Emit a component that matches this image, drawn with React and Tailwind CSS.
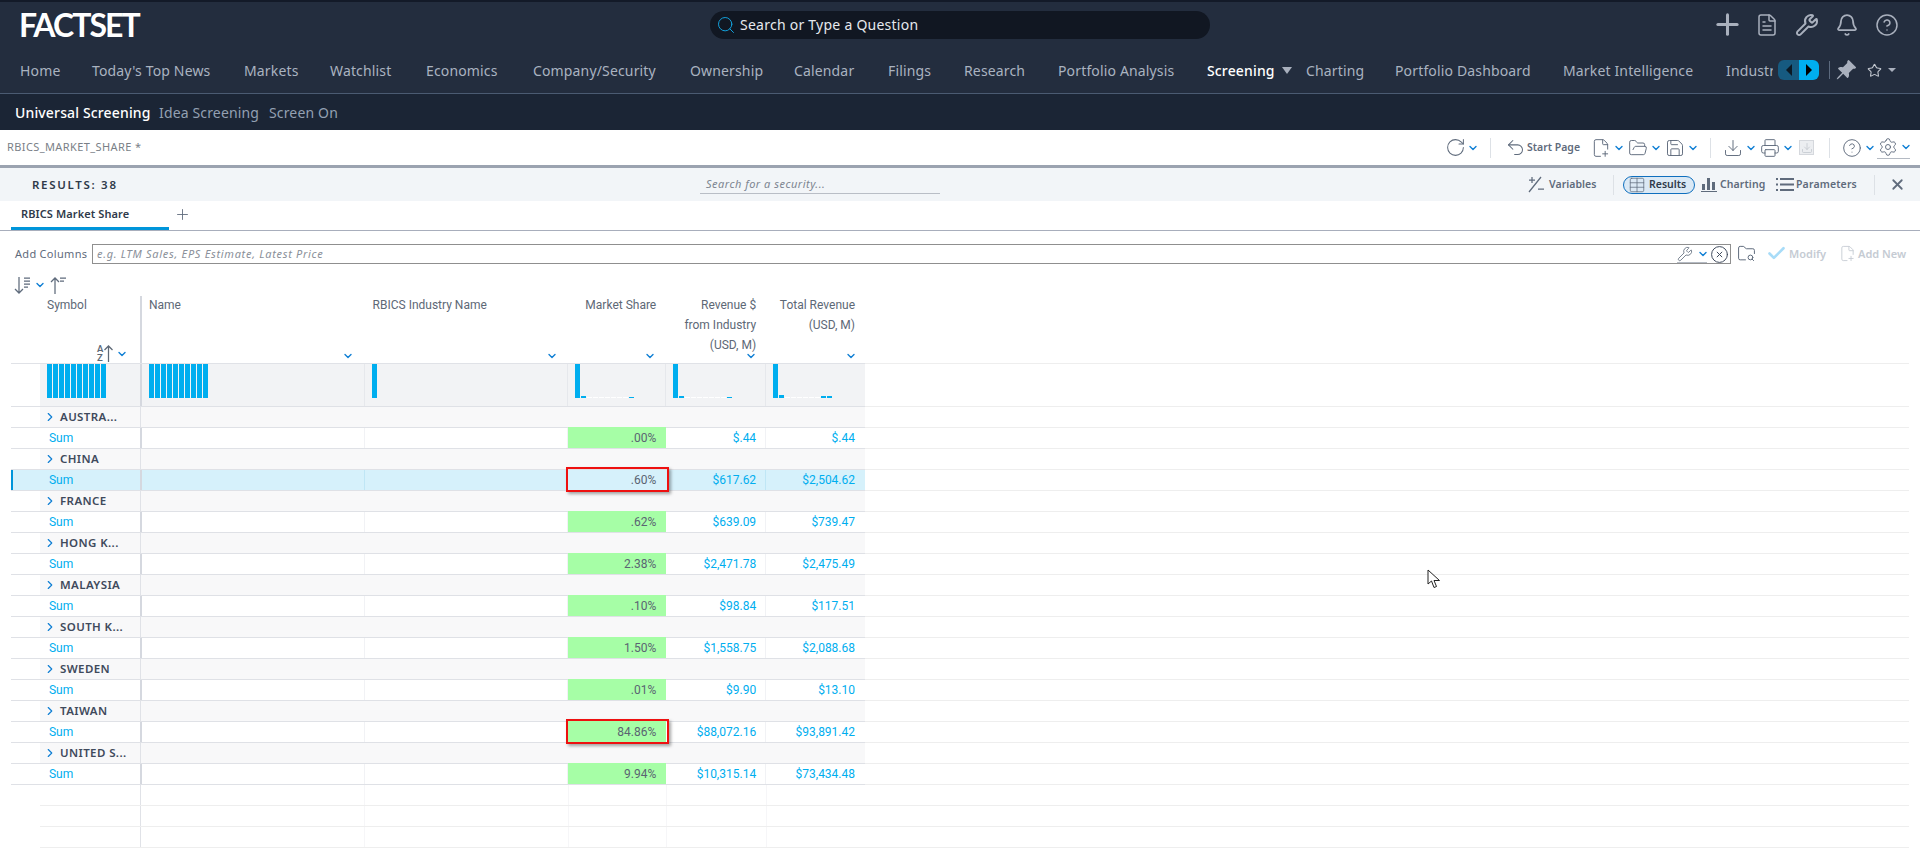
// FactSet universal screening page
import React from "react";
import {
  Bell,
  CircleHelp,
  CircleX,
  ChevronDown,
  ChevronRight,
  Check,
  Download,
  FolderOpen,
  FolderSearch,
  Plus,
  Printer,
  RotateCw,
  Save,
  Search,
  Settings,
  Star,
  Table,
  Undo2,
  Wrench,
  X,
  FilePlus2,
  FileText,
} from "lucide-react";
import { BsPinAngleFill } from "react-icons/bs";

const navItems = [
  { label: "Home", w: "w-[72px]" },
  { label: "Today's Top News", w: "w-[152px]" },
  { label: "Markets", w: "w-[86px]" },
  { label: "Watchlist", w: "w-[96px]" },
  { label: "Economics", w: "w-[107px]" },
  { label: "Company/Security", w: "w-[157px]" },
  { label: "Ownership", w: "w-[104px]" },
  { label: "Calendar", w: "w-[94px]" },
  { label: "Filings", w: "w-[76px]" },
  { label: "Research", w: "w-[94px]" },
  { label: "Portfolio Analysis", w: "w-[149px]" },
  { label: "Screening", w: "w-[99px]", active: true },
  { label: "Charting", w: "w-[89px]" },
  { label: "Portfolio Dashboard", w: "w-[168px]" },
  { label: "Market Intelligence", w: "w-[163px]" },
  { label: "Industries", w: "w-[80px]" },
];

const groups = [
  { name: "AUSTRA...", share: ".00%", rev: "$.44", total: "$.44" },
  { name: "CHINA", share: ".60%", rev: "$617.62", total: "$2,504.62", selected: true },
  { name: "FRANCE", share: ".62%", rev: "$639.09", total: "$739.47" },
  { name: "HONG K...", share: "2.38%", rev: "$2,471.78", total: "$2,475.49" },
  { name: "MALAYSIA", share: ".10%", rev: "$98.84", total: "$117.51" },
  { name: "SOUTH K...", share: "1.50%", rev: "$1,558.75", total: "$2,088.68" },
  { name: "SWEDEN", share: ".01%", rev: "$9.90", total: "$13.10" },
  { name: "TAIWAN", share: "84.86%", rev: "$88,072.16", total: "$93,891.42", boxed: true },
  { name: "UNITED S...", share: "9.94%", rev: "$10,315.14", total: "$73,434.48" },
];

const flatBars = [34, 34, 34, 34, 34, 34, 34, 34, 34, 34];

// Small blue chevron used all over the toolbars
const Chev = ({ className = "" }) => (
  <span className={"flex w-2 shrink-0 justify-center text-[#0f7fd4] " + className}>
    <ChevronDown size={12} strokeWidth={2.75} className="shrink-0" />
  </span>
);

// Toolbar icon: 16px footprint, the drawing may spill a little over it
const Tool = ({ icon: Icon, size = 20, stroke = 1.15, className = "" }) => (
  <span className={"flex w-4 shrink-0 justify-center " + className}>
    <Icon size={size} strokeWidth={stroke} className="shrink-0" />
  </span>
);

const Sep = ({ className = "" }) => (
  <div className={"h-5 w-px shrink-0 bg-[#dde1e6] " + className}></div>
);

// Histogram bars, 5px wide on a 6px pitch. Zero values are a white dash.
const Bars = ({ heights, className = "" }) => (
  <div className={"flex h-[34px] items-end gap-px " + className}>
    {heights.map((h, i) => (
      <div
        key={i}
        className={h === 0 ? "h-px w-[5px] bg-white" : "w-[5px] bg-[#00aeef]"}
        style={h === 0 ? undefined : { height: h }}
      ></div>
    ))}
  </div>
);

const TopBar = () => (
  <div className="bg-[#232d3e]">
    <div className="h-[2px] bg-[#131a28]"></div>
    <div className="flex h-[45px] items-center">
      <div className="ml-[19px] w-[691px] font-['Lato',sans-serif] text-[32px] font-bold leading-none tracking-[-1.9px] text-white">
        FACTSET
      </div>
      <div className="flex h-7 w-[500px] items-center rounded-[14px] bg-[#111722] pl-[6px]">
        <Search size={20} strokeWidth={1.15} className="text-[#12a5e2]" />
        <span className="ml-[4px] text-[14px] tracking-[0.25px] text-[#e6e9ee]">Search or Type a Question</span>
      </div>
      <div className="ml-[501px] flex items-center text-[#a9b0bd]">
        <Plus size={33} strokeWidth={2.2} />
        <FileText size={24} strokeWidth={1.5} className="ml-[11px]" />
        <Wrench size={24} strokeWidth={2} className="ml-4" />
        <Bell size={24} strokeWidth={1.75} className="ml-4" />
        <CircleHelp size={24} strokeWidth={1.5} className="ml-4" />
      </div>
    </div>
    <div className="flex h-[47px] items-center border-b border-[#4b5b72] pl-5">
      <div className="flex w-[1753px] overflow-hidden">
        {navItems.map((item) => (
          <div
            key={item.label}
            className={
              item.w +
              " relative shrink-0 whitespace-nowrap text-[14px] tracking-[0.15px] " +
              (item.active ? "font-medium text-white" : "text-[#aab3c0]")
            }
          >
            {item.label}
            {item.active ? (
              <span className="absolute left-[75px] top-[7px] h-0 w-0 border-x-[5px] border-t-[7px] border-x-transparent border-t-[#a9b0bd]"></span>
            ) : null}
          </div>
        ))}
      </div>
      <div className="ml-[5px] flex h-5 w-[41px] overflow-hidden rounded-[6px]">
        <div className="flex w-[21px] items-center justify-center bg-[#165a80]">
          <span className="h-0 w-0 border-y-[6px] border-r-[6px] border-y-transparent border-r-[#0b1a26]"></span>
        </div>
        <div className="flex w-5 items-center justify-center bg-[#00aeef]">
          <span className="h-0 w-0 border-y-[6px] border-l-[6px] border-y-transparent border-l-black"></span>
        </div>
      </div>
      <div className="ml-[10px] h-[18px] w-px bg-[#5c6a7e]"></div>
      <BsPinAngleFill size={22} className="ml-[5px] text-[#a9b0bd]" />
      <Star size={15} strokeWidth={1.75} className="ml-[10px] text-[#c3c8d0]" />
      <span className="ml-[6px] h-0 w-0 border-x-[4px] border-t-[4px] border-x-transparent border-t-[#a9b0bd]"></span>
    </div>
  </div>
);

const SubNav = () => (
  <div className="flex h-9 items-center bg-[#1b2535] pl-[15px] text-[14px] tracking-[0.15px] text-[#93a0b2]">
    <div className="w-[144px] whitespace-nowrap font-medium text-white">Universal Screening</div>
    <div className="w-[110px] whitespace-nowrap">Idea Screening</div>
    <div className="whitespace-nowrap">Screen On</div>
  </div>
);

const Toolbar = () => (
  <div className="flex h-[38px] items-start border-b-[3px] border-[#9ba3b0] bg-white text-[#5f6b7c]">
    <div className="flex h-[35px] w-full items-center pr-[10px]">
      <div className="pl-[7px] text-[11px] tracking-[0.4px] text-[#7a7f87]">RBICS_MARKET_SHARE *</div>
      <div className="ml-auto flex items-center">
        <Tool icon={RotateCw} size={21} />
        <Chev className="ml-[6px]" />
        <Sep className="ml-[13px]" />
        <Tool icon={Undo2} size={21} className="ml-4" />
        <div className="ml-1 w-[56px] whitespace-nowrap text-[10.5px] font-semibold">Start Page</div>
        <Tool icon={FilePlus2} className="ml-[10px]" />
        <Chev className="ml-[6px]" />
        <Tool icon={FolderOpen} className="ml-[7px]" />
        <Chev className="ml-[6px]" />
        <Tool icon={Save} className="ml-[7px]" />
        <Chev className="ml-[6px]" />
        <Sep className="ml-[13px]" />
        <Tool icon={Download} className="ml-[14px]" />
        <Chev className="ml-[6px]" />
        <Tool icon={Printer} className="ml-[7px]" />
        <Chev className="ml-[6px]" />
        <div className="ml-[7px] flex h-[15px] w-[15px] shrink-0 items-center justify-center border border-[#d5d8dd] bg-[#eceef1] text-[#c0c5cc]">
          <Download size={12} strokeWidth={1.5} />
        </div>
        <Sep className="ml-[15px]" />
        <Tool icon={CircleHelp} className="ml-[14px]" />
        <Chev className="ml-[6px]" />
        <div className="ml-[3px] flex items-center border-b border-[#b4bac3] pb-px pl-[3px]">
          <Tool icon={Settings} />
          <Chev className="ml-[6px]" />
        </div>
      </div>
    </div>
  </div>
);

const ResultsBar = () => (
  <div className="flex h-[33px] items-center bg-[#f2f5f8] text-[#5f6b7c]">
    <div className="w-[700px] pl-8 text-[11.5px] font-semibold tracking-[1.7px] text-[#2f3a4a]">RESULTS: 38</div>
    <div className="flex h-[18px] w-[240px] items-center border-b border-[#b9bec6] pl-[6px] text-[11px] italic tracking-[0.5px] text-[#7d8591]">
      Search for a security...
    </div>
    <div className="ml-auto flex items-center pr-[14px] text-[10.5px] font-semibold">
      <svg width="17" height="17" viewBox="0 0 17 17" fill="none" stroke="currentColor" strokeWidth="1.25">
        <path d="M1 16 L13 1 M1 4 H7 M4 1 V7 M10 13 H16" />
      </svg>
      <div className="ml-1 w-[47px] tracking-[0.05px]">Variables</div>
      <Sep className="ml-[17px]" />
      <div className="ml-[9px] flex h-[18px] w-[72px] items-center overflow-hidden rounded-full border-[1.5px] border-[#0f6fbe] bg-[#dbe9f5] pl-[4px] text-[#2f3a4a]">
        <Table size={18} strokeWidth={1} className="text-[#5f6b7c]" />
        <span className="ml-[3px]">Results</span>
      </div>
      <svg width="16" height="15" viewBox="0 0 16 15" fill="currentColor" className="ml-[6px]">
        <path d="M1 7h3v6H1z M6 1h3v12H6z M11 5h3v8h-3z M0 14h16v1H0z" />
      </svg>
      <div className="ml-[3px] w-[45px] tracking-[0.1px]">Charting</div>
      <svg width="18" height="15" viewBox="0 0 18 15" fill="none" stroke="currentColor" strokeWidth="2" className="ml-[11px]">
        <path d="M0 2h2 M4 2h14 M0 7.5h2 M4 7.5h14 M0 13h2 M4 13h14" />
      </svg>
      <div className="ml-[2px] w-[62px] whitespace-nowrap tracking-[0.15px]">Parameters</div>
      <Sep className="ml-4" />
      <X size={17} strokeWidth={2.5} className="ml-[14px]" />
    </div>
  </div>
);

const TabRow = () => (
  <div className="flex h-[30px] border-b border-[#a8aebc] bg-white pl-[11px]">
    <div className="flex h-[29px] w-[158px] items-center border-b-[3px] border-[#0095da] pl-[10px] text-[11px] font-semibold tracking-[0.1px] text-[#2f3a4a]">
      RBICS Market Share
    </div>
    <Plus size={17} strokeWidth={1.25} className="ml-[5px] mt-[5px] text-[#5f6b7c]" />
  </div>
);

const AddColumns = () => (
  <div className="flex h-[41px] items-start bg-white pt-[13px] text-[#5f6b7c]">
    <div className="ml-[15px] w-[77px] whitespace-nowrap pt-[2px] text-[11px] tracking-[0.3px]">Add Columns</div>
    <div className="flex h-5 w-[1639px] items-center border border-[#8f8f8f] pl-[4px] pr-[1px]">
      <span className="text-[11px] italic tracking-[0.7px] text-[#8a9099]">e.g. LTM Sales, EPS Estimate, Latest Price</span>
      <div className="ml-auto flex items-center">
        <div className="flex h-[18px] items-center border-b border-[#b4bac3]">
          <Wrench size={16} strokeWidth={1.25} />
          <Chev className="ml-[6px]" />
        </div>
        <CircleX size={19} strokeWidth={1.25} className="ml-[3px] text-[#3f4a5c]" />
      </div>
    </div>
    <FolderSearch size={19} strokeWidth={1.25} className="ml-[6px]" />
    <Check size={21} strokeWidth={3} className="ml-[10px] -mt-px text-[#a8dcf8]" />
    <div className="ml-[2px] mt-[2px] w-[48px] text-[11px] font-semibold text-[#c5cbd3]">Modify</div>
    <FilePlus2 size={17} strokeWidth={1.25} className="ml-[2px] mt-[1px] text-[#c5cbd3]" />
    <div className="ml-[2px] mt-[2px] whitespace-nowrap text-[11px] font-semibold text-[#c5cbd3]">Add New</div>
  </div>
);

const SortRow = () => (
  <div className="flex h-[23px] items-center bg-white pl-[14px] pt-[3px] text-[#5f6b7c]">
    <svg width="17" height="17" viewBox="0 0 17 17" fill="none" stroke="currentColor" strokeWidth="1.25">
      <path d="M5 0 V16 M1 12 L5 16 L9 12 M10 1 H16 M10 4 H16 M10 7 H16 M10 10 H14" />
    </svg>
    <Chev className="ml-[5px]" />
    <svg width="17" height="17" viewBox="0 0 17 17" fill="none" stroke="currentColor" strokeWidth="1.25" className="ml-[6px]">
      <path d="M5 17 V1 M1 5 L5 1 L9 5 M10 1 H16 M10 4 H14" />
    </svg>
  </div>
);

const HeaderRow = () => (
  <div className="flex bg-white">
    <div className="flex h-[69px] w-[854px] border-b border-[#e0e2e7] pl-[29px] text-[12px] leading-[20px] text-[#5d6876]">
      <div className="relative w-[100px] pl-[7px]">
        Symbol
        <div className="absolute bottom-[1px] left-[57px] flex items-center">
          <div className="flex flex-col text-[9.5px] font-semibold leading-[8.5px]">
            <span>A</span>
            <span>Z</span>
          </div>
          <svg width="11" height="17" viewBox="0 0 11 17" fill="none" stroke="currentColor" strokeWidth="1.25">
            <path d="M5.5 17 V1 M1.5 5 L5.5 1 L9.5 5" />
          </svg>
          <Chev className="ml-[4px]" />
        </div>
      </div>
      <div className="mt-px w-[2px] bg-[#d5d8df]"></div>
      <div className="relative w-[223px] pl-[7px]">
        Name
        <Chev className="absolute bottom-[1px] right-[13px]" />
      </div>
      <div className="relative w-[204px] pl-2">
        RBICS Industry Name
        <Chev className="absolute bottom-[1px] right-[12px]" />
      </div>
      <div className="relative w-[98px] pr-[10px] text-right">
        Market Share
        <Chev className="absolute bottom-[1px] right-[12px]" />
      </div>
      <div className="relative w-[100px] pr-[10px] text-right">
        Revenue $<br />
        from Industry<br />
        (USD, M)
        <Chev className="absolute bottom-[1px] right-[11px]" />
      </div>
      <div className="relative w-[99px] pr-[10px] text-right">
        Total Revenue<br />
        (USD, M)
        <Chev className="absolute bottom-[1px] right-[10px]" />
      </div>
    </div>
    <div className="h-[69px] flex-1 border-b border-[#eeeeee]"></div>
  </div>
);

const HistogramRow = () => (
  <div className="flex bg-white">
    <div className="flex h-[43px] w-[854px] border-b border-[#dfe1e6] pl-[29px]">
      <div className="flex w-full bg-[#f2f3f5]">
        <div className="w-[100px] pl-[7px]">
          <Bars heights={flatBars} />
        </div>
        <div className="w-[2px] bg-[#d5d8df]"></div>
        <div className="w-[223px] border-r border-[#e6e8ec] pl-[7px]">
          <Bars heights={flatBars} />
        </div>
        <div className="w-[204px] border-r border-[#e6e8ec] pl-[7px]">
          <Bars heights={[34]} />
        </div>
        <div className="w-[98px] border-r border-[#e6e8ec] pl-[7px]">
          <Bars heights={[34, 2, 0, 0, 0, 0, 0, 0, 0, 1]} />
        </div>
        <div className="w-[100px] border-r border-[#e6e8ec] pl-[7px]">
          <Bars heights={[34, 2, 0, 0, 0, 0, 0, 0, 0, 1]} />
        </div>
        <div className="w-[99px] pl-[7px]">
          <Bars heights={[34, 3, 0, 0, 0, 0, 0, 0, 2, 2]} />
        </div>
      </div>
    </div>
    <div className="h-[43px] flex-1 border-b border-[#eeeeee]"></div>
  </div>
);

const GroupRow = ({ name }) => (
  <div className="flex bg-white">
    <div className="flex h-[21px] w-[854px] border-b border-[#dfe1e6] pl-[29px]">
      <div className="flex w-full bg-[#f8f8f9]">
        <div className="flex w-[100px] items-center pl-[3px] font-['Noto_Sans',sans-serif] text-[11.5px] font-semibold tracking-[0.4px] text-[#3f4a5c]">
          <ChevronRight size={14} strokeWidth={2} className="shrink-0 text-[#0f7fd4]" />
          <span className="ml-[3px] whitespace-nowrap">{name}</span>
        </div>
        <div className="w-px bg-[#e0e2e7]"></div>
      </div>
    </div>
    <div className="h-[21px] flex-1 border-b border-[#eeeeee]"></div>
  </div>
);

const SumRow = ({ row }) => {
  const cellBorder = row.selected ? "border-[#bfe6f5]" : "border-[#f1f2f5]";

  return (
    <div className="flex bg-white">
      <div
        className={
          "flex h-[21px] w-[854px] border-b border-[#dfe1e6] " +
          (row.selected ? "bg-[#d6f1fb]" : "")
        }
      >
        <div className={"w-[29px] " + (row.selected ? "border-l-2 border-[#0095da]" : "")}></div>
        <div className="flex w-[100px] items-center pl-[9px] text-[#00aeef]">Sum</div>
        <div className="w-[2px] bg-[#d5d8df]"></div>
        <div className={"w-[223px] border-r " + cellBorder}></div>
        <div className={"w-[204px] border-r " + cellBorder}></div>
        <div
          className={
            "relative -mt-px flex h-[21px] w-[98px] items-center justify-end pr-[10px] text-[#5a6472] " +
            (row.selected ? "" : "bg-[#a6fea6]")
          }
        >
          {row.share}
          {row.selected || row.boxed ? (
            <div className="absolute -bottom-[2px] -left-[2px] -right-[3px] -top-[2px] border-2 border-[#ee1010] shadow-[2px_2px_3px_rgba(0,0,0,0.35)]"></div>
          ) : null}
        </div>
        <div className={"flex w-[100px] items-center justify-end border-r pr-[9px] text-[#00aeef] " + cellBorder}>
          {row.rev}
        </div>
        <div className="flex w-[99px] items-center justify-end pr-[10px] text-[#00aeef]">{row.total}</div>
      </div>
      <div className="h-[21px] flex-1 border-b border-[#eeeeee]"></div>
    </div>
  );
};

const BlankRow = () => (
  <div className="flex bg-white">
    <div className="w-[29px]"></div>
    <div className="flex h-[21px] w-[825px] border-b border-[#eeeeee]">
      <div className="w-[100px]"></div>
      <div className="w-px bg-[#e0e2e7]"></div>
      <div className="w-[224px] border-r border-[#f6f6f8]"></div>
      <div className="w-[204px] border-r border-[#f6f6f8]"></div>
      <div className="w-[98px] border-r border-[#f6f6f8]"></div>
      <div className="w-[100px] border-r border-[#f6f6f8]"></div>
    </div>
    <div className="h-[21px] flex-1 border-b border-[#eeeeee]"></div>
  </div>
);

const App = () => {
  return (
    <div className="relative h-[848px] w-[1920px] overflow-hidden bg-white font-['Noto_Sans',sans-serif]">
      <TopBar />
      <SubNav />
      <Toolbar />
      <ResultsBar />
      <TabRow />
      <AddColumns />
      <SortRow />
      <div className="ml-[11px] w-[1898px] font-['Roboto',sans-serif] text-[12px]">
        <HeaderRow />
        <HistogramRow />
        {groups.map((row) => (
          <React.Fragment key={row.name}>
            <GroupRow name={row.name} />
            <SumRow row={row} />
          </React.Fragment>
        ))}
        <BlankRow />
        <BlankRow />
        <BlankRow />
      </div>
      {/* mouse pointer caught in the screenshot */}
      <svg
        width="14"
        height="21"
        viewBox="0 0 14 21"
        className="absolute left-[1427px] top-[569px]"
      >
        <path
          d="M1 1 L1 15 L4.5 12 L7 18.5 L9.5 17.5 L7 11.5 L12.5 11.5 Z"
          fill="white"
          stroke="#222"
          strokeWidth="1"
        />
      </svg>
    </div>
  );
};

export default App;
